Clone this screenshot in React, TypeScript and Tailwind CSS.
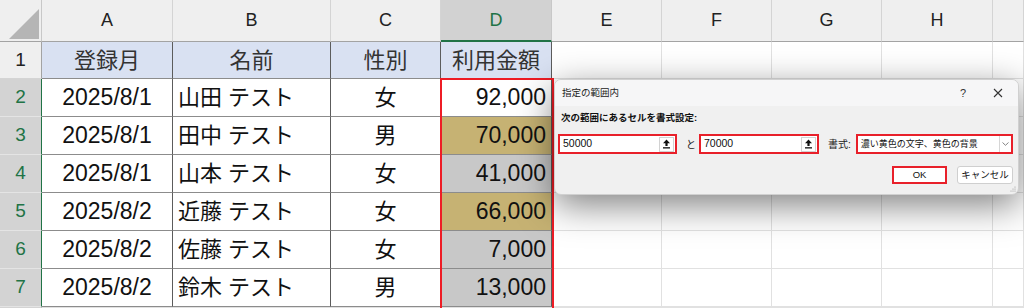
import React from "react";

type Row = {
  date: string;
  name: string;
  sex: string;
  amount: string;
  tone: "active" | "gray" | "tan";
};

const rows: Row[] = [
  { date: "2025/8/1", name: "山田 テスト", sex: "女", amount: "92,000", tone: "active" },
  { date: "2025/8/1", name: "田中 テスト", sex: "男", amount: "70,000", tone: "tan" },
  { date: "2025/8/1", name: "山本 テスト", sex: "女", amount: "41,000", tone: "gray" },
  { date: "2025/8/2", name: "近藤 テスト", sex: "女", amount: "66,000", tone: "tan" },
  { date: "2025/8/2", name: "佐藤 テスト", sex: "女", amount: "7,000", tone: "gray" },
  { date: "2025/8/2", name: "鈴木 テスト", sex: "男", amount: "13,000", tone: "gray" },
];

const headCell =
  "flex items-center justify-center border-r border-b border-r-[#d4d4d4] border-b-[#a3a3a3] bg-[#efefef] text-[18px] text-[#222]";
const tableCell = "flex items-center border-r border-b border-r-[#5c5c5c] border-b-[#8c8c8c] text-[22px] text-[#111]";
const emptyCell = "border-r border-b border-[#e1e1e1] bg-white";

const toneClass = {
  active: "bg-white text-[#111]",
  gray: "bg-[#c8c8c8] text-[#111]",
  tan: "bg-[#c6b273] text-[#8a5f1c]",
};

const UploadIcon = () => (
  <svg width="9" height="10" viewBox="0 0 9 10" aria-hidden="true">
    <path d="M4.5 0.5 L8 4.2 H5.6 V7 H3.4 V4.2 H1 Z" fill="#111" />
    <rect x="1" y="8.2" width="7" height="1.3" fill="#111" />
  </svg>
);

const RefInput = ({ value }: { value: string }) => (
  <div className="flex h-[20px] items-center border-2 border-[#e8202a] bg-white">
    <span className="flex-1 pl-[3px] text-[10.5px] text-[#111]">{value}</span>
    <span className="mr-[1px] flex h-[15px] w-[15px] items-center justify-center border border-[#d2d2d2] bg-white">
      <UploadIcon />
    </span>
  </div>
);

const Dialog = () => (
  <div className="absolute left-[554px] top-[79px] h-[116px] w-[465px] overflow-hidden rounded-[7px] border border-[#d0d0d0] bg-[#f0f0f0] shadow-[0_10px_36px_rgba(0,0,0,0.5)]">
    <div className="flex h-[26px] items-center bg-[#f6f6f7] pl-[7px] text-[9.5px] text-[#222]">
      <span>指定の範囲内</span>
      <div className="ml-auto flex items-center gap-[27px] pr-[15px]">
        <span className="text-[11px] text-[#333]">?</span>
        <svg width="10" height="10" viewBox="0 0 10 10" aria-hidden="true">
          <path d="M1 1 L9 9 M9 1 L1 9" stroke="#333" strokeWidth="1.1" />
        </svg>
      </div>
    </div>

    <div className="mt-[5px] pl-[6px] text-[9.5px] font-bold text-[#111]">次の範囲にあるセルを書式設定:</div>

    <div className="mt-[9px] flex items-center pl-[3px] text-[10px] text-[#222]">
      <div className="w-[119px]">
        <RefInput value="50000" />
      </div>
      <span className="ml-[9px]">と</span>
      <div className="ml-[3px] w-[120px]">
        <RefInput value="70000" />
      </div>
      <span className="ml-[9px]">書式:</span>
      <div className="ml-[5px] flex h-[20px] w-[157px] items-center border-2 border-[#e8202a] bg-white">
        <span className="flex-1 pl-[3px] text-[9px] text-[#111]">濃い黄色の文字、黄色の背景</span>
        <span className="flex h-full w-[12px] items-center justify-center border-l border-[#d6d6d6]">
          <svg width="7" height="4" viewBox="0 0 7 4" aria-hidden="true">
            <path d="M0.5 0.5 L3.5 3.3 L6.5 0.5" fill="none" stroke="#777" strokeWidth="0.9" />
          </svg>
        </span>
      </div>
    </div>

    <div className="mt-[12px] flex justify-end gap-[10px] pr-[5px] text-[9.5px] text-[#111]">
      <button className="flex h-[18px] w-[55px] items-center justify-center border-2 border-[#e8202a] bg-white">OK</button>
      <button className="flex h-[18px] w-[56px] items-center justify-center rounded-[3px] border border-[#cfcfcf] bg-white">
        キャンセル
      </button>
    </div>

    <svg className="absolute bottom-[2px] right-[2px]" width="6" height="6" viewBox="0 0 6 6" aria-hidden="true">
      <circle cx="5" cy="1" r="0.6" fill="#999" />
      <circle cx="3" cy="3" r="0.6" fill="#999" />
      <circle cx="5" cy="3" r="0.6" fill="#999" />
      <circle cx="1" cy="5" r="0.6" fill="#999" />
      <circle cx="3" cy="5" r="0.6" fill="#999" />
      <circle cx="5" cy="5" r="0.6" fill="#999" />
    </svg>
  </div>
);

export default function App() {
  const letters = ["A", "B", "C", "D", "E", "F", "G", "H"];

  return (
    <div className="relative h-[308px] w-[1024px] overflow-hidden bg-white font-['Liberation_Sans','Noto_Sans_CJK_JP',sans-serif]">
      <div className="grid grid-cols-[42px_131px_158px_110px_111px_110px_110px_110px_111px_31px] grid-rows-[42px_37px_38px_38px_38px_38px_38px_38px]">
        {/* column headers */}
        <div className="relative border-r border-b border-r-[#c8c8c8] border-b-[#a3a3a3] bg-[#efefef]">
          <svg className="absolute bottom-[2px] right-[2px]" width="30" height="30" viewBox="0 0 30 30" aria-hidden="true">
            <path d="M30 0 L30 30 L0 30 Z" fill="#b5b5b5" />
          </svg>
        </div>
        {letters.map((l) =>
          l === "D" ? (
            <div
              key={l}
              className="flex items-center justify-center border-r border-b-2 border-r-[#c8c8c8] border-b-[#217346] bg-[#d2d2d2] text-[18px] text-[#217346]"
            >
              {l}
            </div>
          ) : (
            <div key={l} className={headCell}>
              {l}
            </div>
          )
        )}
        <div className={headCell}></div>

        {/* row 1 */}
        <div className="flex items-center justify-center border-r border-b border-r-[#a3a3a3] border-b-[#d4d4d4] bg-[#efefef] text-[19px] text-[#222]">
          1
        </div>
        {["登録月", "名前", "性別", "利用金額"].map((h) => (
          <div key={h} className={`${tableCell} justify-center bg-[#d9e1f2] text-[#333]`}>
            {h}
          </div>
        ))}
        {[0, 1, 2, 3, 4].map((i) => (
          <div key={i} className={emptyCell}></div>
        ))}

        {/* rows 2-7 */}
        {rows.map((r, i) => (
          <React.Fragment key={i}>
            <div className="flex items-center justify-center border-r border-b border-r-[#217346] border-b-[#e4e4e4] bg-[#d3d3d3] text-[19px] text-[#217346]">
              {i + 2}
            </div>
            <div className={`${tableCell} justify-center bg-white text-[23px]`}>{r.date}</div>
            <div className={`${tableCell} bg-white pl-[5px]`}>{r.name}</div>
            <div className={`${tableCell} justify-center bg-white`}>{r.sex}</div>
            <div className={`${tableCell} justify-end pr-[5px] text-[23px] ${toneClass[r.tone]}`}>{r.amount}</div>
            {[0, 1, 2, 3, 4].map((j) => (
              <div key={j} className={emptyCell}></div>
            ))}
          </React.Fragment>
        ))}

        {/* row 8, only its top edge is in view */}
        <div className="border-r border-b border-r-[#a3a3a3] border-b-[#d4d4d4] bg-[#efefef]"></div>
        {[0, 1, 2, 3, 4, 5, 6, 7, 8].map((j) => (
          <div key={j} className={emptyCell}></div>
        ))}
      </div>

      {/* selection outline on D2:D7 */}
      <div className="pointer-events-none absolute left-[440px] top-[78px] h-[240px] w-[114px] border-2 border-[#ee1c25]"></div>

      <Dialog />
    </div>
  );
}
